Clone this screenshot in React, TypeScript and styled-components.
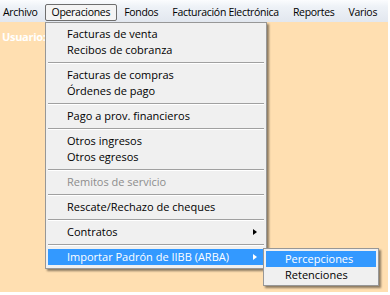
import React from 'react'
import styled, { createGlobalStyle } from 'styled-components'

const GlobalStyle = createGlobalStyle`
  html, body {
    margin: 0;
    padding: 0;
    background: #ffffff;
  }
  body {
    font-family: "Open Sans", "Liberation Sans", sans-serif;
    font-size: 11px;
  }
`

const Screen = styled.div`
  position: relative;
  width: 388px;
  height: 292px;
  background: #ffdfb1;
  overflow: hidden;
`

const MenuBar = styled.div`
  display: flex;
  align-items: center;
  height: 22px;
  background: linear-gradient(to bottom, #fbfcfe 0%, #eef2f7 30%, #e2e7ef 100%);
`

const BarItem = styled.div<{ open?: boolean }>`
  height: 17px;
  line-height: 15px;
  padding: 0 6px;
  margin-top: 3px;
  color: #000;
  font-size: 10.5px;
  white-space: nowrap;
  letter-spacing: -0.3px;
  box-sizing: border-box;
  border: 1px solid ${(p) => (p.open ? '#6e6e6e' : 'transparent')};
  border-radius: 2px;
  background: ${(p) => (p.open ? '#f4f4f4' : 'transparent')};
  &:first-child {
    padding-left: 2px;
  }
`

const Body = styled.div`
  padding: 7px 2px;
`

const UserLabel = styled.div`
  color: #ffffff;
  font-weight: 700;
  font-size: 11px;
  letter-spacing: -0.3px;
`

const Popup = styled.div<{ left: number; top: number; width: number }>`
  position: absolute;
  left: ${(p) => p.left}px;
  top: ${(p) => p.top}px;
  width: ${(p) => p.width}px;
  box-sizing: border-box;
  padding: 2px;
  background: #f0f0f0;
  border: 1px solid #979797;
  box-shadow: 2px 2px 2px rgba(0, 0, 0, 0.45);
  display: flex;
  flex-direction: column;
`

const MainPopup = styled(Popup)`
  padding: 3px 2px;
`

const Item = styled.div<{ active?: boolean; disabled?: boolean }>`
  position: relative;
  height: 16px;
  line-height: 16px;
  padding-left: 19px;
  white-space: nowrap;
  color: ${(p) => (p.active ? '#ffffff' : p.disabled ? '#8d8d8d' : '#000000')};
  background: ${(p) => (p.active ? '#3399ff' : 'transparent')};
`

const Arrow = styled.span<{ active?: boolean }>`
  position: absolute;
  right: 7px;
  top: 5px;
  width: 0;
  height: 0;
  border-top: 3.5px solid transparent;
  border-bottom: 3.5px solid transparent;
  border-left: 4px solid ${(p) => (p.active ? '#ffffff' : '#000000')};
`

const Separator = styled.div`
  height: 9px;
  display: flex;
  align-items: center;
  &::before {
    content: '';
    flex: 1;
    height: 1px;
    background: #a0a0a0;
    border-bottom: 1px solid #ffffff;
  }
`

type Entry = { label: string; disabled?: boolean; submenu?: boolean; active?: boolean } | 'sep'

const entries: Entry[] = [
  { label: 'Facturas de venta' },
  { label: 'Recibos de cobranza' },
  'sep',
  { label: 'Facturas de compras' },
  { label: 'Órdenes de pago' },
  'sep',
  { label: 'Pago a prov. financieros' },
  'sep',
  { label: 'Otros ingresos' },
  { label: 'Otros egresos' },
  'sep',
  { label: 'Remitos de servicio', disabled: true },
  'sep',
  { label: 'Rescate/Rechazo de cheques' },
  'sep',
  { label: 'Contratos', submenu: true },
  'sep',
  { label: 'Importar Padrón de IIBB (ARBA)', submenu: true, active: true },
]

const bar = ['Archivo', 'Operaciones', 'Fondos', 'Facturación Electrónica', 'Reportes', 'Varios']

const App = () => {
  return (
    <>
      <GlobalStyle />
      <Screen>
        <MenuBar>
          {bar.map((b) => (
            <BarItem key={b} open={b === 'Operaciones'}>
              {b}
            </BarItem>
          ))}
        </MenuBar>
        <Body>
          <UserLabel>Usuario:</UserLabel>
        </Body>
        <MainPopup left={45} top={22} width={222}>
          {entries.map((e, i) =>
            e === 'sep' ? (
              <Separator key={i} />
            ) : (
              <Item key={i} active={e.active} disabled={e.disabled}>
                {e.label}
                {e.submenu && <Arrow active={e.active} />}
              </Item>
            )
          )}
        </MainPopup>
        <Popup left={263} top={248} width={116}>
          <Item active>Percepciones</Item>
          <Item>Retenciones</Item>
        </Popup>
      </Screen>
    </>
  )
}

export default App
